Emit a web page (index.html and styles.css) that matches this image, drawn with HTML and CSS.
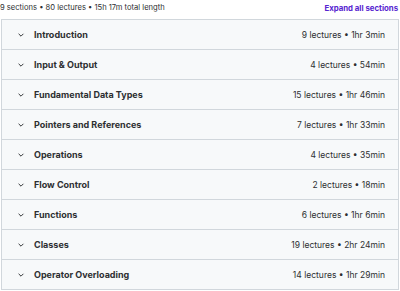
FILE: index.html
```html
<!DOCTYPE html>
<html lang="en">
<head>
  <meta charset="UTF-8">
  <title>Course content</title>
  <link rel="stylesheet" href="styles.css">
</head>
<body>
  <div class="curriculum">
    <div class="curriculum-header">
      <span class="summary">9 sections • 80 lectures • 15h 17m total length</span>
      <button class="expand-all">Expand all sections</button>
    </div>
    <div class="sections">
      <div class="section">
        <svg class="chevron" viewBox="0 0 10 10" width="8" height="8"><path d="M2 3.5 L5 6.5 L8 3.5" fill="none" stroke="#2d2f31" stroke-width="1.2"/></svg>
        <span class="section-title">Introduction</span>
        <span class="section-meta">9 lectures • 1hr 3min</span>
      </div>
      <div class="section">
        <svg class="chevron" viewBox="0 0 10 10" width="8" height="8"><path d="M2 3.5 L5 6.5 L8 3.5" fill="none" stroke="#2d2f31" stroke-width="1.2"/></svg>
        <span class="section-title">Input &amp; Output</span>
        <span class="section-meta">4 lectures • 54min</span>
      </div>
      <div class="section">
        <svg class="chevron" viewBox="0 0 10 10" width="8" height="8"><path d="M2 3.5 L5 6.5 L8 3.5" fill="none" stroke="#2d2f31" stroke-width="1.2"/></svg>
        <span class="section-title">Fundamental Data Types</span>
        <span class="section-meta">15 lectures • 1hr 46min</span>
      </div>
      <div class="section">
        <svg class="chevron" viewBox="0 0 10 10" width="8" height="8"><path d="M2 3.5 L5 6.5 L8 3.5" fill="none" stroke="#2d2f31" stroke-width="1.2"/></svg>
        <span class="section-title">Pointers and References</span>
        <span class="section-meta">7 lectures • 1hr 33min</span>
      </div>
      <div class="section">
        <svg class="chevron" viewBox="0 0 10 10" width="8" height="8"><path d="M2 3.5 L5 6.5 L8 3.5" fill="none" stroke="#2d2f31" stroke-width="1.2"/></svg>
        <span class="section-title">Operations</span>
        <span class="section-meta">4 lectures • 35min</span>
      </div>
      <div class="section">
        <svg class="chevron" viewBox="0 0 10 10" width="8" height="8"><path d="M2 3.5 L5 6.5 L8 3.5" fill="none" stroke="#2d2f31" stroke-width="1.2"/></svg>
        <span class="section-title">Flow Control</span>
        <span class="section-meta">2 lectures • 18min</span>
      </div>
      <div class="section">
        <svg class="chevron" viewBox="0 0 10 10" width="8" height="8"><path d="M2 3.5 L5 6.5 L8 3.5" fill="none" stroke="#2d2f31" stroke-width="1.2"/></svg>
        <span class="section-title">Functions</span>
        <span class="section-meta">6 lectures • 1hr 6min</span>
      </div>
      <div class="section">
        <svg class="chevron" viewBox="0 0 10 10" width="8" height="8"><path d="M2 3.5 L5 6.5 L8 3.5" fill="none" stroke="#2d2f31" stroke-width="1.2"/></svg>
        <span class="section-title">Classes</span>
        <span class="section-meta">19 lectures • 2hr 24min</span>
      </div>
      <div class="section">
        <svg class="chevron" viewBox="0 0 10 10" width="8" height="8"><path d="M2 3.5 L5 6.5 L8 3.5" fill="none" stroke="#2d2f31" stroke-width="1.2"/></svg>
        <span class="section-title">Operator Overloading</span>
        <span class="section-meta">14 lectures • 1hr 29min</span>
      </div>
    </div>
  </div>
</body>
</html>
```

FILE: styles.css
```css
html, body {
  margin: 0;
  padding: 0;
  background: #fff;
}
* {
  box-sizing: border-box;
}
.curriculum {
  font-family: Inter, "Noto Sans", sans-serif;
  color: #2d2f31;
  width: 400px;
}
.curriculum-header {
  display: flex;
  justify-content: space-between;
  align-items: center;
  height: 19px;
  padding: 0 2px 4px 0;
}
.summary {
  font-size: 7.6px;
  color: #2d2f31;
}
.expand-all {
  border: none;
  background: none;
  padding: 0;
  font-family: inherit;
  font-size: 7.8px;
  font-weight: 700;
  color: #5624d0;
}
.sections {
  border: 1px solid #d1d7dc;
  border-bottom: none;
  margin: 0 1px 0 1px;
}
.section {
  display: flex;
  align-items: center;
  height: 30px;
  padding: 0 13px 0 15px;
  background: #f7f9fa;
  border-bottom: 1px solid #d1d7dc;
}
.chevron {
  flex-shrink: 0;
  margin-right: 9px;
}
.section-title {
  font-size: 9px;
  font-weight: 700;
  flex-grow: 1;
}
.section-meta {
  font-size: 8.5px;
  color: #2d2f31;
}
```
